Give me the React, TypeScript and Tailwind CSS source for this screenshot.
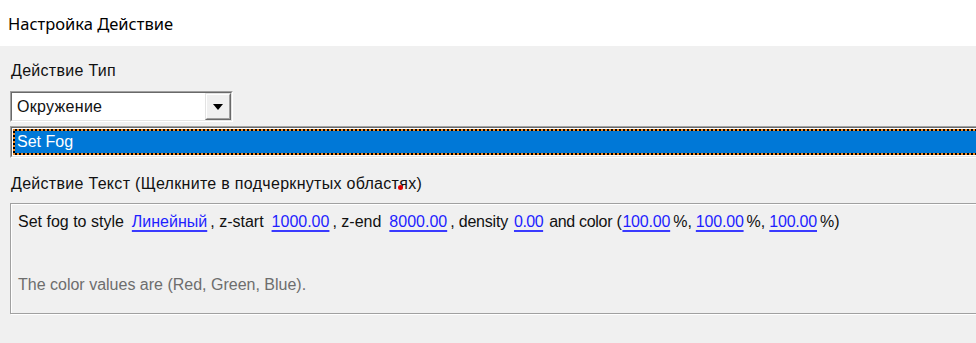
import React from "react";

function Link({ children, l, r, t = "" }: { children: React.ReactNode; l: string; r: string; t?: string }) {
  return (
    <span className={`${l} ${r} ${t} text-[#1e1eff] underline decoration-[#3a3aff] decoration-[2px] underline-offset-[3px]`}>
      {children}
    </span>
  );
}

export default function App() {
  return (
    <div className="relative w-[976px] h-[343px] overflow-hidden bg-[#f0f0f0] font-['Liberation_Sans',Arial,sans-serif] text-[#000]">
      <div className="h-[46px] bg-white flex items-center pl-[8px] pt-[2px] text-[16.5px] font-['Noto_Sans',sans-serif] text-black">
        Настройка Действие
      </div>
      <div className="pl-[10px] pt-[16px]">
        <div className="h-[18px] leading-[18px] text-[16px] tracking-[0.3px] pl-[1px] text-[#111]">Действие Тип</div>
        <div className="mt-[11px] w-[223px] h-[31px] border border-t-[#a0a0a0] border-l-[#a0a0a0] border-b-white border-r-white">
          <div className="h-full w-full flex bg-white border border-t-[#696969] border-l-[#696969] border-b-[#e3e3e3] border-r-[#e3e3e3]">
            <div className="flex-1 flex items-center pl-[5px] text-[16px] tracking-[0.3px] text-[#111]">Окружение</div>
            <div className="w-[26px] h-full border border-t-[#e3e3e3] border-l-[#e3e3e3] border-b-[#696969] border-r-[#696969]">
              <div className="h-full w-full bg-[#f0f0f0] flex items-center justify-center border border-t-white border-l-white border-b-[#a0a0a0] border-r-[#a0a0a0]">
                <svg width="10" height="6" viewBox="0 0 10 6">
                  <polygon points="0,0 10,0 5,6" fill="#000" />
                </svg>
              </div>
            </div>
          </div>
        </div>
        <div className="mt-[4px] w-[1000px] h-[32px] border border-t-[#a0a0a0] border-l-[#a0a0a0] border-b-white border-r-white">
          <div className="h-full w-full bg-white p-[1px] border border-t-[#696969] border-l-[#696969] border-b-[#e3e3e3] border-r-[#e3e3e3]">
            <div className="h-full w-full bg-black">
              <div className="h-full w-full border-2 border-dotted border-[#f08a24] bg-[#0078d7] bg-clip-padding flex items-center pl-[2px] text-[16px] text-white">
                Set Fog
              </div>
            </div>
          </div>
        </div>
        <div className="mt-[17px] h-[18px] leading-[18px] text-[16px] tracking-[0.3px] pl-[1px] text-[#111]">
          Действие Текст (Щелкните в подчеркнутых областях)
        </div>
        <div className="mt-[10px] w-[1000px] h-[111px] border border-[#a0a0a0] shadow-[1px_1px_0_#ffffff,inset_1px_1px_0_#ffffff] pl-[7px] pt-[8px] text-[16px]">
          <div className="h-[20px] leading-[20px] whitespace-nowrap text-[#111]">
            <span>Set fog to style</span>
            <Link l="ml-[8px]" r="mr-[3px]">Линейный</Link>
            <span>, z-start</span>
            <Link l="ml-[8px]" r="mr-[3px]">1000.00</Link>
            <span>, z-end</span>
            <Link l="ml-[8px]" r="mr-[3px]">8000.00</Link>
            <span className="tracking-[-0.2px]">, density</span>
            <Link l="ml-[6px]" r="mr-[6px]" t="tracking-[-0.5px]">0.00</Link>
            <span className="tracking-[-0.3px]">and color (</span>
            <Link l="ml-[1px]" r="mr-[3px]" t="tracking-[-0.2px]">100.00</Link>
            <span>%,</span>
            <Link l="ml-[4px]" r="mr-[3px]" t="tracking-[-0.2px]">100.00</Link>
            <span>%,</span>
            <Link l="ml-[4px]" r="mr-[3px]" t="tracking-[-0.2px]">100.00</Link>
            <span>%)</span>
          </div>
          <div className="mt-[43px] h-[20px] leading-[20px] text-[#6d6d6d]">The color values are (Red, Green, Blue).</div>
        </div>
      </div>
      <div className="absolute left-[398px] top-[185px] w-[5px] h-[5px] rounded-full bg-[#e00000]" />
    </div>
  );
}
